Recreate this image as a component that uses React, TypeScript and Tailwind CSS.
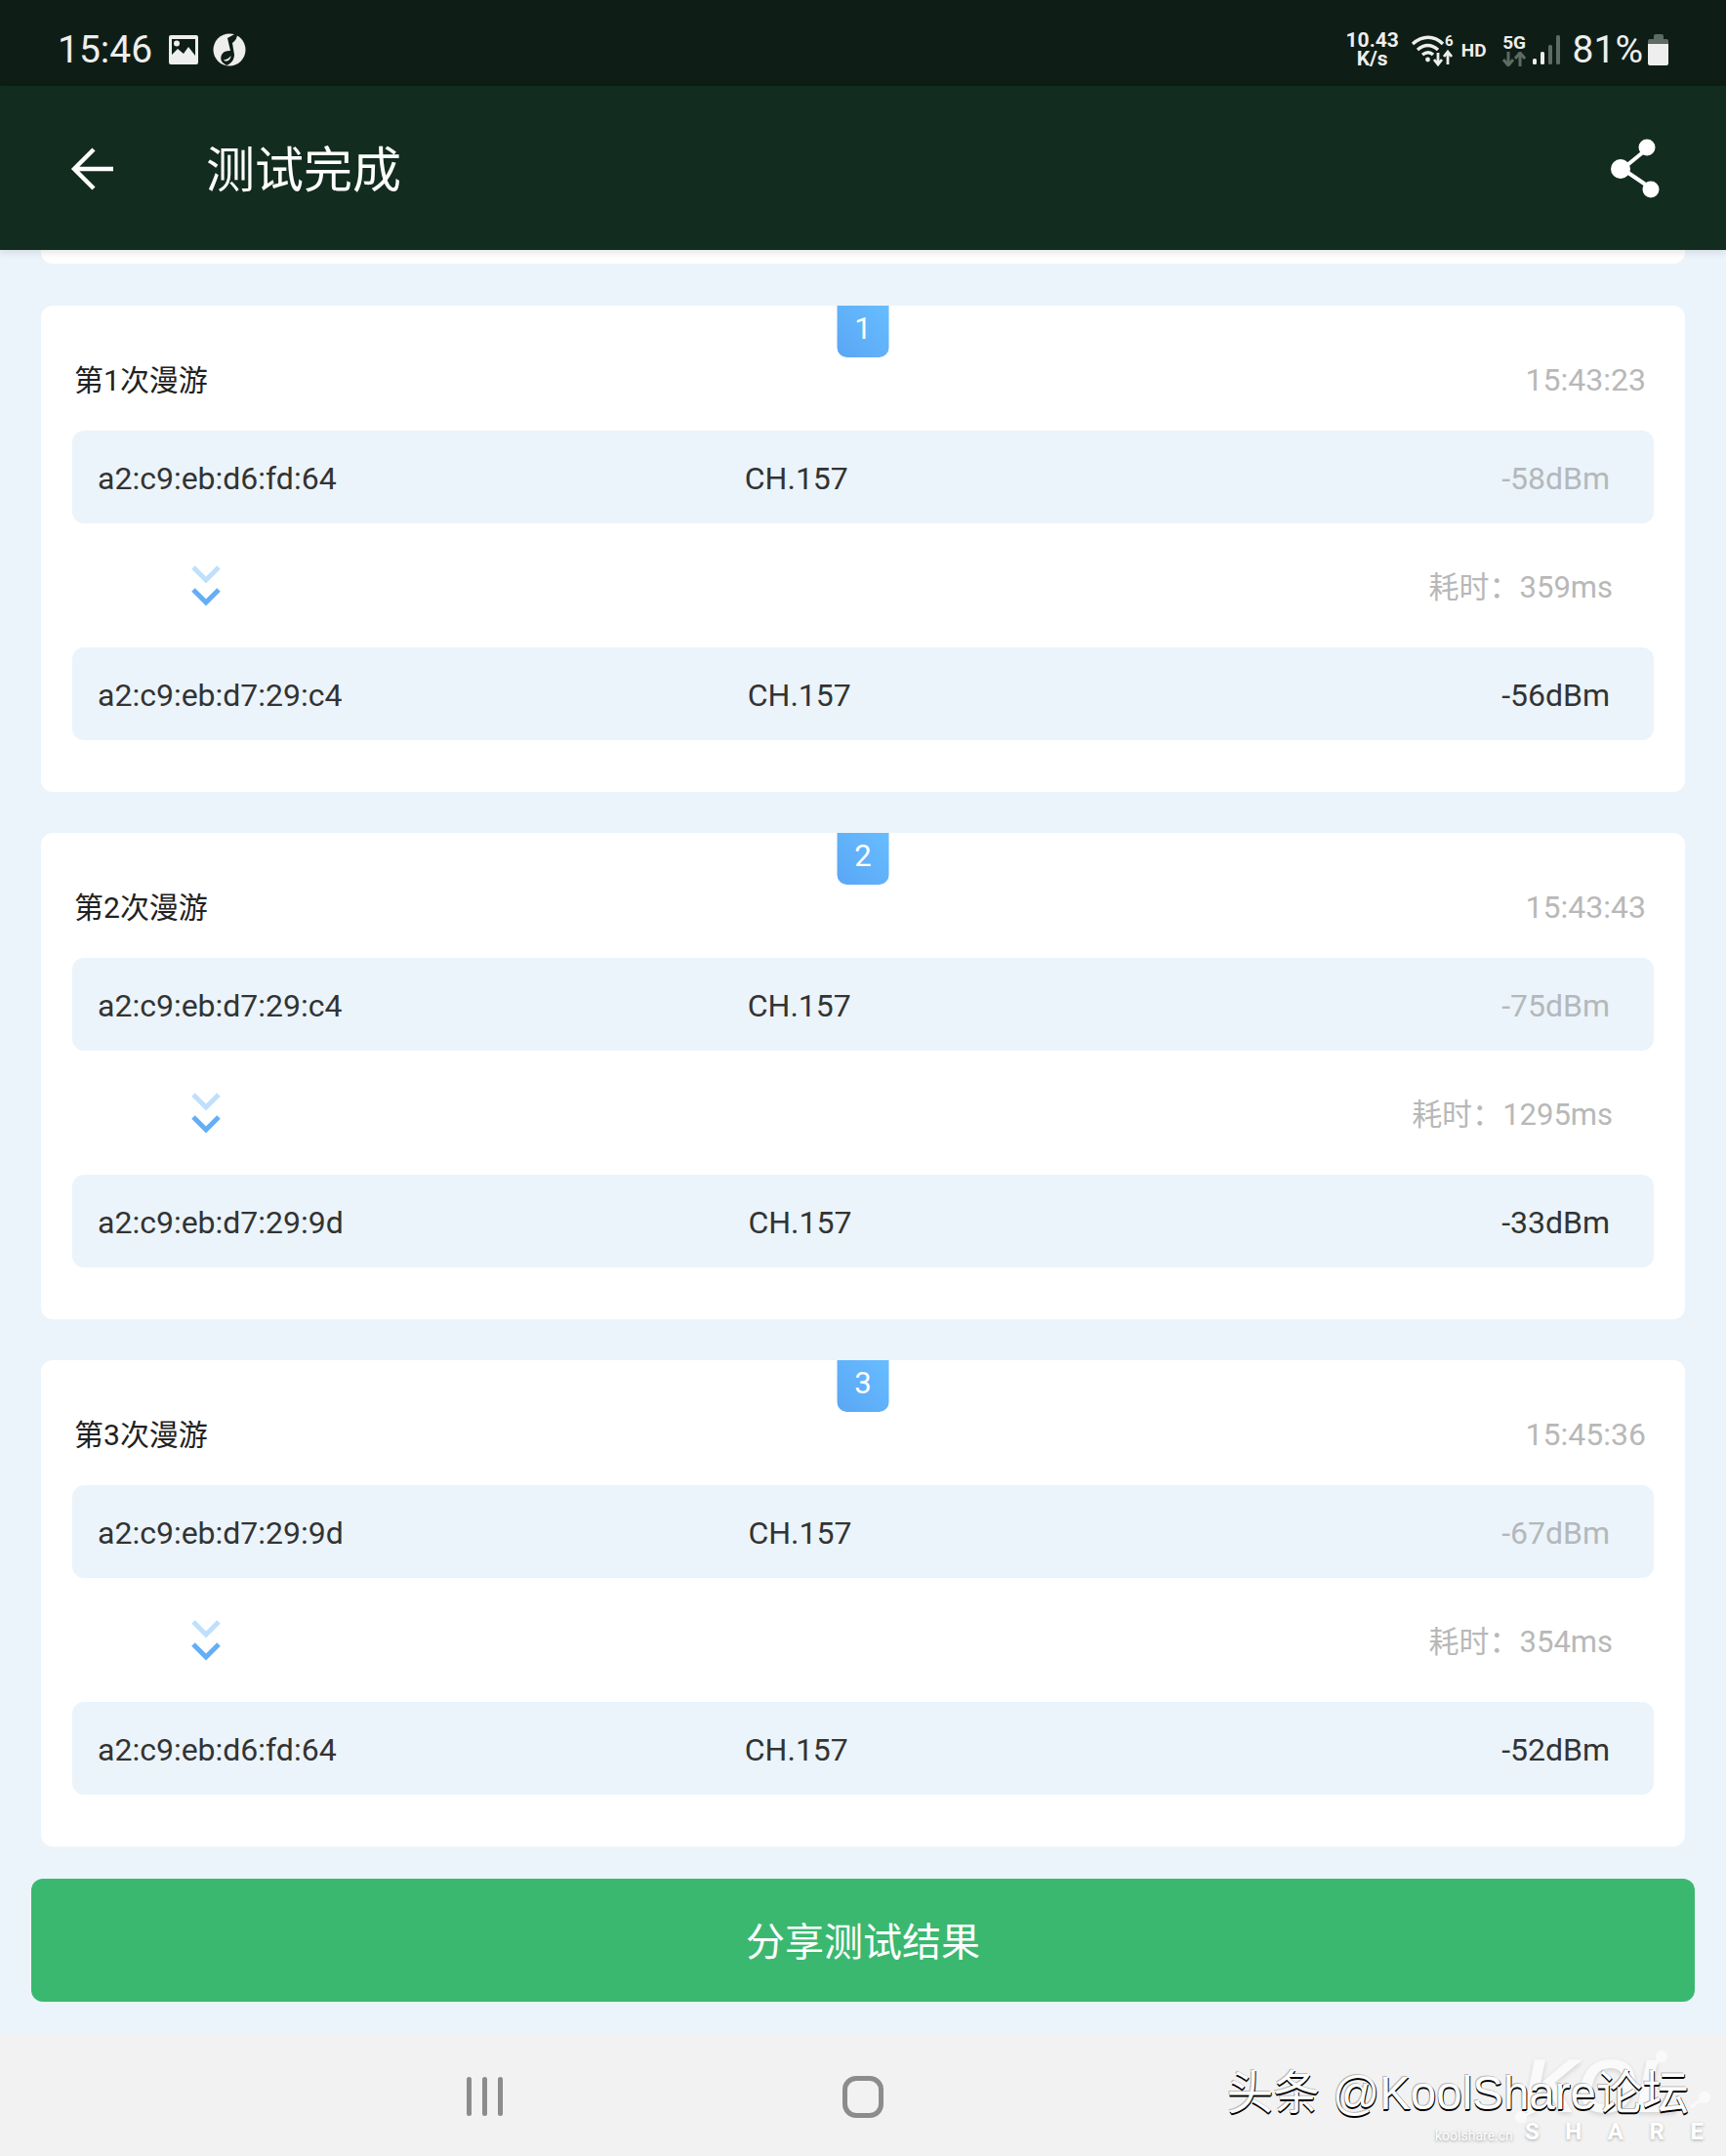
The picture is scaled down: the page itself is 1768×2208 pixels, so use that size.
const fontStack = 'font-[Roboto,"Noto_Sans_CJK_SC",sans-serif]';

type Hop = { mac: string; rssi: string };
type Roam = { id: number; time: string; from: Hop; to: Hop; cost: string };

const roams: Roam[] = [
  {
    id: 1,
    time: '15:43:23',
    from: { mac: 'a2:c9:eb:d6:fd:64', rssi: '-58dBm' },
    to: { mac: 'a2:c9:eb:d7:29:c4', rssi: '-56dBm' },
    cost: '359ms',
  },
  {
    id: 2,
    time: '15:43:43',
    from: { mac: 'a2:c9:eb:d7:29:c4', rssi: '-75dBm' },
    to: { mac: 'a2:c9:eb:d7:29:9d', rssi: '-33dBm' },
    cost: '1295ms',
  },
  {
    id: 3,
    time: '15:45:36',
    from: { mac: 'a2:c9:eb:d7:29:9d', rssi: '-67dBm' },
    to: { mac: 'a2:c9:eb:d6:fd:64', rssi: '-52dBm' },
    cost: '354ms',
  },
];

function StatusBar() {
  return (
    <div className="flex h-[88px] shrink-0 items-center justify-between bg-[#0e1e16] pl-[59px] pr-[59px] pt-[14px] text-[#eeeeee]">
      <div className="flex items-center">
        <span className="text-[39px] leading-none">15:46</span>
        {/* gallery notification */}
        <svg className="ml-[16px]" width="32" height="32" viewBox="0 0 32 32">
          <path
            fillRule="evenodd"
            fill="#eeeeee"
            d="M3 1h26a2 2 0 0 1 2 2v26a2 2 0 0 1-2 2H3a2 2 0 0 1-2-2V3a2 2 0 0 1 2-2zM4 5v16l6-6 6 5 5-7 7 9V5z"
          />
          <circle cx="9" cy="9.5" r="3" fill="#eeeeee" />
        </svg>
        {/* music app notification */}
        <svg className="ml-[14px]" width="34" height="34" viewBox="0 0 34 34">
          <circle cx="17" cy="17" r="16.5" fill="#eeeeee" />
          <path d="M15 5l9-5 1 1c0 4-2 7-5 9l2 12c0 5-3 9-8 11l-4-3c-3-3-2-9 2-11 2-1 4-1 6-1z" fill="#0e1e16" />
          <path d="M11 27c1 2 4 2 6 0 1-1 2-3 1-4 0 2-5 5-7 4z" fill="#eeeeee" />
        </svg>
      </div>
      <div className="flex items-center">
        <div className="flex flex-col items-center text-[21px] font-bold leading-[19px]">
          <span>10.43</span>
          <span>K/s</span>
        </div>
        <svg className="ml-[12px]" width="44" height="34" viewBox="0 0 44 34" fill="none" stroke="#eeeeee">
          <path d="M2 11c10-9 22-9 31 0" strokeWidth="3.4" />
          <path d="M7 17c7-6 14-6 21 0" strokeWidth="3.4" />
          <path d="M12 22c4-3 8-3 11 0" strokeWidth="3.4" />
          <circle cx="17.5" cy="27" r="2.4" fill="#eeeeee" stroke="none" />
          <path d="M28 20v11M24 27l4 5 4-5M38 32V20M34 24l4-5 4 5" strokeWidth="2.8" />
          <text x="35" y="13" fontSize="15" fontWeight="700" fill="#eeeeee" stroke="none">
            6
          </text>
        </svg>
        <span className="ml-[8px] text-[19px] font-bold leading-none">HD</span>
        <div className="ml-[16px] flex w-[25px] flex-col items-center">
          <span className="text-[19px] font-bold leading-[18px]">5G</span>
          <svg width="24" height="15" viewBox="0 0 24 15" fill="none" stroke="#5d6b64" strokeWidth="3">
            <path d="M6 0v13M1 8l5 6 5-6M18 15V2M13 7l5-6 5 6" />
          </svg>
        </div>
        <svg className="ml-[6px]" width="29" height="30" viewBox="0 0 29 30">
          <rect x="0" y="24" width="4" height="6" rx="1.5" fill="#eeeeee" />
          <rect x="8" y="17" width="4" height="13" rx="1.5" fill="#eeeeee" />
          <rect x="16" y="10" width="4" height="20" rx="1.5" fill="#5d6b64" />
          <rect x="24" y="0" width="4" height="30" rx="1.5" fill="#5d6b64" />
        </svg>
        <span className="ml-[12px] text-[39px] leading-none">81%</span>
        <div className="ml-[5px] flex w-[21px] flex-col items-center">
          <div className="h-[5px] w-[10px] rounded-t-[2px] bg-[#5d6b64]" />
          <div className="h-[5px] w-[21px] rounded-t-[2px] bg-[#5d6b64]" />
          <div className="h-[22px] w-[21px] rounded-b-[2px] bg-[#eeeeee]" />
        </div>
      </div>
    </div>
  );
}

function AppHeader() {
  return (
    <div className="relative z-10 flex h-[168px] shrink-0 items-center justify-between bg-[#132c20] pl-[72px] pr-[67px] pt-[2px] shadow-[0_2px_8px_rgba(0,0,0,0.12)]">
      <div className="flex items-center">
        <svg width="46" height="46" viewBox="0 0 46 46" fill="none" stroke="#ffffff" strokeWidth="4.4">
          <path d="M44 23H5M24 3L4 23l20 20" />
        </svg>
        <h1 className="ml-[93px] pt-[3px] text-[50px] font-normal leading-none text-white">测试完成</h1>
      </div>
      <svg width="52" height="62" viewBox="0 0 52 62">
        <path d="M13 31L40 9M13 31l31 21" stroke="#ffffff" strokeWidth="4" fill="none" />
        <circle cx="11" cy="31" r="10" fill="#ffffff" />
        <circle cx="38" cy="9" r="8.5" fill="#ffffff" />
        <circle cx="42" cy="52" r="8.5" fill="#ffffff" />
      </svg>
    </div>
  );
}

function HopRow({ hop, weak }: { hop: Hop; weak?: boolean }) {
  return (
    <div className="flex h-[95px] items-center justify-between rounded-[12px] bg-[#ebf4fa] pl-[26px] pr-[45px] pt-[2px] text-[32px] text-[#333333]">
      <span>{hop.mac}</span>
      <span>CH.157</span>
      <span className={`w-[362px] text-right ${weak ? 'text-[#b4b8bb]' : ''}`}>{hop.rssi}</span>
    </div>
  );
}

function RoamCard({ roam }: { roam: Roam }) {
  return (
    <div className="relative h-[498px] rounded-[12px] bg-white px-[32px] pt-[54px]">
      <div className="absolute left-1/2 top-0 flex h-[53px] w-[53px] -translate-x-1/2 justify-center rounded-b-[10px] bg-gradient-to-tr from-[#5aa6f5] to-[#67bdff] pt-[4px] text-[31px] leading-[40px] text-white">
        {roam.id}
      </div>
      <div className="flex h-[42px] items-center justify-between pl-[2px] pr-[8px]">
        <span className="pt-[3px] text-[30px] text-[#222222]">第{roam.id}次漫游</span>
        <span className="pt-[1px] text-[32px] text-[#b8b8b8]">{roam.time}</span>
      </div>
      <div className="mt-[32px]">
        <HopRow hop={roam.from} weak />
        <div className="flex h-[127px] items-center justify-between pl-[122px] pr-[42px]">
          <svg width="30" height="42" viewBox="0 0 30 42" fill="none" strokeWidth="5">
            <path d="M2 2l13 13L28 2" stroke="#bfe0fd" />
            <path d="M2 25l13 13 13-13" stroke="#64aef6" />
          </svg>
          <span className="pt-[5px] text-[31px] text-[#b8b8b8]">耗时：{roam.cost}</span>
        </div>
        <HopRow hop={roam.to} />
      </div>
    </div>
  );
}

function Watermark() {
  return (
    <div className="pointer-events-none absolute bottom-0 right-0 h-[126px] w-[520px]">
      <span className="absolute left-[312px] top-[15px] text-[78px] font-bold italic leading-none tracking-[-1px] text-[#fafafa] [font-family:'Liberation_Sans'] [text-shadow:0_2px_5px_rgba(0,0,0,0.14)]">
        KOL
      </span>
      {/* logo nodes */}
      <svg className="absolute left-0 top-0" width="520" height="126" viewBox="0 0 520 126" fill="none">
        <path d="M454 24l-12 16M498 66l-14 10M310 86l18-8" stroke="#fafafa" strokeWidth="3" />
        <circle cx="454" cy="24" r="6" fill="#fafafa" />
        <circle cx="498" cy="66" r="6" fill="#fafafa" />
        <circle cx="310" cy="86" r="6" fill="#fafafa" />
      </svg>
      <span className="absolute right-[38px] top-[38px] whitespace-nowrap text-[47.5px] leading-none text-white [font-family:'Liberation_Sans','Noto_Sans_CJK_SC'] [text-shadow:0_2px_0_#000,1px_1px_0_#000,-1px_-1px_0_#bbb]">
        头条 @KoolShare论坛
      </span>
      <span className="absolute bottom-[14px] left-[222px] text-[14px] leading-none text-white [text-shadow:0_1px_3px_#999]">
        koolshare.cn
      </span>
      <div className="absolute bottom-[13px] left-[314px] flex w-[183px] justify-between text-[24px] font-bold leading-none text-white [text-shadow:0_1px_3px_#aaa]">
        <span>S</span>
        <span>H</span>
        <span>A</span>
        <span>R</span>
        <span>E</span>
      </div>
    </div>
  );
}

function NavBar() {
  return (
    <div className="relative flex h-[126px] shrink-0 items-center justify-center bg-[#f2f2f2]">
      <div className="flex items-center gap-[348px] pt-[4px]">
        <div className="flex h-[40px] w-[37px] gap-[11px]">
          <div className="w-[5px] rounded-full bg-[#8c8c8c]" />
          <div className="w-[5px] rounded-full bg-[#8c8c8c]" />
          <div className="w-[5px] rounded-full bg-[#8c8c8c]" />
        </div>
        <div className="h-[43px] w-[42px] rounded-[14px] border-[5px] border-[#8c8c8c]" />
        {/* back button slot, empty on this screen */}
        <div className="w-[37px]" />
      </div>
      <Watermark />
    </div>
  );
}

export default function App() {
  return (
    <div className={`flex h-[2208px] w-full flex-col overflow-hidden bg-[#ecf4fb] ${fontStack}`}>
      <StatusBar />
      <AppHeader />
      <div className="flex flex-1 flex-col">
        <div className="mx-[42px] h-[14px] rounded-b-[12px] bg-white" />
        <div className="mx-[42px] mt-[43px] flex flex-col gap-[42px]">
          {roams.map((roam) => (
            <RoamCard key={roam.id} roam={roam} />
          ))}
        </div>
        <div className="mx-[32px] mt-[33px] flex h-[126px] items-center justify-center rounded-[12px] bg-[#3bb86f] pt-[5px] text-[40px] text-white">
          分享测试结果
        </div>
      </div>
      <NavBar />
    </div>
  );
}
